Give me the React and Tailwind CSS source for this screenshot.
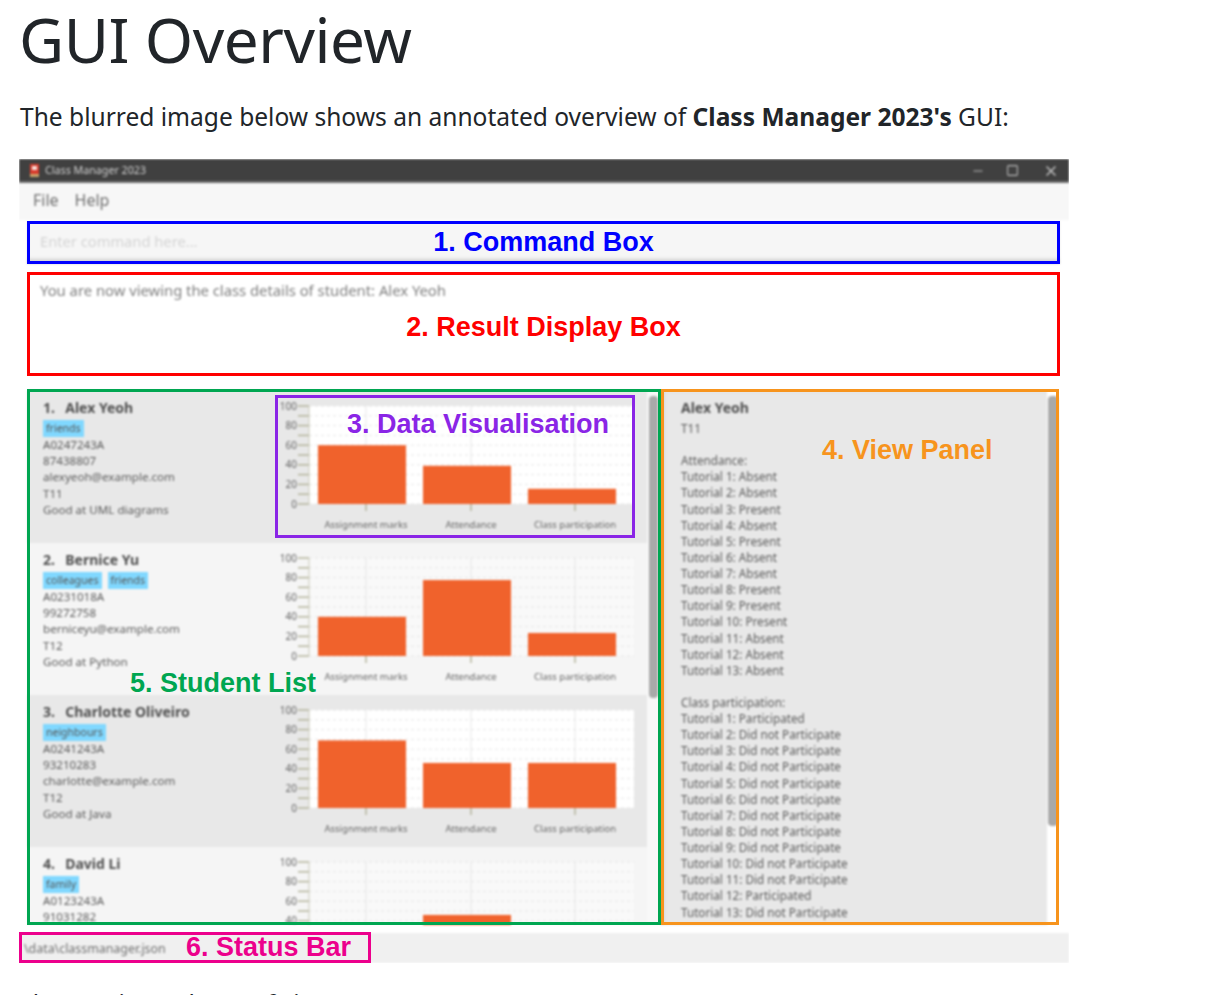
import React from 'react';
import { Minus, Square, X } from 'lucide-react';

const students = [
  {
    name: 'Alex Yeoh',
    tags: ['friends'],
    lines: ['A0247243A', '87438807', 'alexyeoh@example.com', 'T11', 'Good at UML diagrams'],
    values: [60, 39, 15.5],
    plot: '#ffffff',
    card: 'bg-[#e8e8e8]',
  },
  {
    name: 'Bernice Yu',
    tags: ['colleagues', 'friends'],
    lines: ['A0231018A', '99272758', 'berniceyu@example.com', 'T12', 'Good at Python'],
    values: [40, 77.5, 23.5],
    plot: '#f9f9f9',
    card: 'bg-[#f5f5f5]',
  },
  {
    name: 'Charlotte Oliveiro',
    tags: ['neighbours'],
    lines: ['A0241243A', '93210283', 'charlotte@example.com', 'T12', 'Good at Java'],
    values: [69, 46, 46],
    plot: '#ffffff',
    card: 'bg-[#e8e8e8]',
  },
  {
    name: 'David Li',
    tags: ['family'],
    lines: ['A0123243A', '91031282'],
    values: [30, 46, 20],
    plot: '#f9f9f9',
    card: 'bg-[#f5f5f5]',
  },
];

const attendance = ['Absent', 'Absent', 'Present', 'Absent', 'Present', 'Absent', 'Absent', 'Present', 'Present', 'Present', 'Absent', 'Absent', 'Absent'];
const participation = ['Participated', 'Did not Participate', 'Did not Participate', 'Did not Participate', 'Did not Participate', 'Did not Participate', 'Did not Participate', 'Did not Participate', 'Did not Participate', 'Did not Participate', 'Did not Participate', 'Participated', 'Did not Participate'];
const categories = ['Assignment marks', 'Attendance', 'Class participation'];

function Chart({ values, plot }) {
  const top = 7;
  const base = 105;
  const barX = [43, 148, 253];
  const centers = [91, 196, 300];
  return (
    <svg width="362" height="135" viewBox="0 0 362 135" className="mt-2 shrink-0 font-['Noto_Sans',sans-serif]">
      <rect x="34" y={top} width="325" height={base - top} fill={plot} />
      {[0, 1, 2, 3, 4, 5, 6, 7, 8, 9, 10].map((i) => (
        <g key={i}>
          <line x1="34" x2="359" y1={base - i * 9.8} y2={base - i * 9.8} stroke="#e6e6e6" strokeDasharray="3 3" />
          <line x1="23" x2="34" y1={base - i * 9.8} y2={base - i * 9.8} stroke="#b5b59c" strokeWidth="1.5" />
        </g>
      ))}
      {centers.map((c) => (
        <line key={c} x1={c} x2={c} y1={top} y2={base} stroke="#e6e6e6" />
      ))}
      <line x1="34" x2="34" y1={top} y2={base} stroke="#c9c9b8" />
      {[0, 20, 40, 60, 80, 100].map((v) => (
        <text key={v} x="22" y={base - v * 0.98 + 3.5} textAnchor="end" fontSize="10" fill="#666">
          {v}
        </text>
      ))}
      {values.map((v, i) => (
        <rect key={i} x={barX[i]} y={base - v * 0.98} width="88" height={v * 0.98} fill="#f0622c" />
      ))}
      {centers.map((c, i) => (
        <g key={c}>
          <line x1={c} x2={c} y1={base} y2={base + 7} stroke="#b5b59c" strokeWidth="1.5" />
          <text x={c} y={base + 24} textAnchor="middle" fontSize="9.5" fill="#666">
            {categories[i]}
          </text>
        </g>
      ))}
    </svg>
  );
}

function StudentCard({ student, index }) {
  return (
    <div className={`flex h-[152px] shrink-0 ${student.card}`}>
      <div className="w-[248px] shrink-0 pl-4 pt-2 text-[#5c5c5c]">
        <div className="text-[14px] font-bold leading-[18px] text-[#505050]">
          {index + 1}.&nbsp; <span className="ml-[3px]">{student.name}</span>
        </div>
        <div className="mt-[3px] flex gap-[6px]">
          {student.tags.map((tag) => (
            <span key={tag} className="h-[17px] bg-[#80d8ff] px-[3px] text-[10.5px] leading-[17px] text-[#555]">
              {tag}
            </span>
          ))}
        </div>
        {student.lines.map((line) => (
          <div key={line} className="text-[11.6px] leading-[16.2px]">
            {line}
          </div>
        ))}
      </div>
      <Chart values={student.values} plot={student.plot} />
    </div>
  );
}

function ViewPanel() {
  return (
    <div className="h-full flex-1 overflow-hidden bg-[#e8e8e8] pl-[20px] pt-[8px] text-[11.7px] leading-[16.13px] text-[#5c5c5c] shadow-[inset_3px_0_3px_#d0d0d0]">
      <div className="text-[14px] font-bold leading-[18px] text-[#505050]">Alex Yeoh</div>
      <div className="mt-[3px]">T11</div>
      <div className="mt-[16px]">Attendance:</div>
      {attendance.map((a, i) => (
        <div key={i}>Tutorial {i + 1}: {a}</div>
      ))}
      <div className="mt-[16px]">Class participation:</div>
      {participation.map((p, i) => (
        <div key={i}>Tutorial {i + 1}: {p}</div>
      ))}
    </div>
  );
}

export default function App() {
  return (
    <div className="h-[995px] overflow-hidden bg-white pl-[19px] font-['Noto_Sans',sans-serif] text-[#212529]">
      <h1 className="h-[78px] text-[62px] font-normal leading-[78px] tracking-[-0.45px]">GUI Overview</h1>
      <p className="ml-[1px] mt-[21px] text-[24.55px] leading-[36px]">
        The blurred image below shows an annotated overview of <strong className="font-bold">Class Manager 2023's</strong> GUI:
      </p>

      <div className="relative mt-[24px] h-[804px] w-[1050px]">
        {/* the app screenshot, blurred as a whole */}
        <div className="h-full overflow-hidden">
          <div className="flex h-full flex-col bg-white blur-[1.1px]">
            <div className="flex h-[24px] shrink-0 items-center bg-[#404040] pb-[1px] pl-[11px] pr-[10px] text-[10.7px] text-[#cfcfcf] shadow-[inset_0_-2px_1px_#707070]">
              <svg width="9" height="13" viewBox="0 0 9 13" className="mr-[6px]">
                <rect width="9" height="10" fill="#d8392b" />
                <rect x="2" y="2" width="5" height="4" fill="#f5e0dc" />
                <rect y="10" width="9" height="3" fill="#c9a36a" />
              </svg>
              <span>Class Manager 2023</span>
              <div className="ml-auto flex items-center text-[#b8b8b8]">
                <Minus size={14} strokeWidth={2} />
                <Square size={13} strokeWidth={2} className="ml-[21px]" />
                <X size={16} strokeWidth={2.5} className="ml-[24px]" />
              </div>
            </div>

            <div className="flex h-[37px] shrink-0 items-center gap-[16px] bg-[#f7f7f7] pb-[3px] pl-[14px] text-[16px] text-[#707070]">
              <span>File</span>
              <span>Help</span>
            </div>

            <div className="ml-[8px] mr-[9px] mt-[1px] flex h-[43px] shrink-0 items-center bg-[#f6f6f6] pb-[3px] pl-[13px] text-[14.7px] text-[#d4d4d4] shadow-[inset_0_-5px_3px_#d2d2d2]">
              Enter command here...
            </div>

            <div className="ml-[8px] mr-[9px] mt-[8px] h-[104px] shrink-0 bg-white pl-[13px] pt-[8px] text-[14.8px] leading-[20px] text-[#808080]">
              You are now viewing the class details of student: Alex Yeoh
            </div>

            <div className="ml-[8px] mr-[9px] mt-[14px] flex h-[535px] shrink-0 overflow-hidden">
              <div className="flex w-[634px] shrink-0 bg-[#f8f8f8] pt-[1px]">
                <div className="flex w-[620px] shrink-0 flex-col">
                  {students.map((s, i) => (
                    <StudentCard key={s.name} student={s} index={i} />
                  ))}
                </div>
                <div className="ml-[2px] mt-[5px] h-[302px] w-[9px] rounded-[4px] bg-[#a9a9a9]" />
              </div>
              <div className="flex min-w-0 flex-1 bg-white pt-[1px]">
                <ViewPanel />
                <div className="ml-[1px] mr-[2px] mt-[5px] h-[430px] w-[10px] rounded-[4px] bg-[#a9a9a9]" />
              </div>
            </div>

            <div className="mt-[8px] flex h-[30px] shrink-0 items-center bg-[#f0f0f0] pl-[5px] pt-[2px] text-[12.4px] text-[#707070]">
              \data\classmanager.json
            </div>
          </div>
        </div>

        {/* annotation boxes drawn over the screenshot */}
        <div className="absolute left-[8px] top-[62px] flex h-[43px] w-[1033px] items-center justify-center border-[3px] border-[#0000ff] font-['Liberation_Sans',Arial,sans-serif] text-[27px] font-bold text-[#0000ff]">
          1. Command Box
        </div>
        <div className="absolute left-[8px] top-[113px] flex h-[104px] w-[1033px] items-center justify-center border-[3px] border-[#ff0000] pt-[7px] font-['Liberation_Sans',Arial,sans-serif] text-[27px] font-bold text-[#ff0000]">
          2. Result Display Box
        </div>
        <div className="absolute left-[8px] top-[230px] h-[536px] w-[634px] border-[3px] border-[#00a651]">
          <span className="absolute left-[100px] top-[275px] whitespace-nowrap font-['Liberation_Sans',Arial,sans-serif] text-[27px] font-bold leading-[32px] text-[#00a651]">
            5. Student List
          </span>
        </div>
        <div className="absolute left-[642px] top-[230px] h-[536px] w-[398px] border-[3px] border-[#f7941d]">
          <span className="absolute left-[158px] top-[42px] whitespace-nowrap font-['Liberation_Sans',Arial,sans-serif] text-[27px] font-bold leading-[32px] text-[#f7941d]">
            4. View Panel
          </span>
        </div>
        <div className="absolute left-[256px] top-[236px] h-[143px] w-[360px] border-[3px] border-[#8a25e6]">
          <span className="absolute left-[69px] top-[10px] whitespace-nowrap font-['Liberation_Sans',Arial,sans-serif] text-[27px] font-bold leading-[32px] text-[#8a25e6]">
            3. Data Visualisation
          </span>
        </div>
        <div className="absolute left-0 top-[773px] h-[31px] w-[352px] border-[3px] border-[#ec008c]">
          <span className="absolute left-[164px] top-[-4px] whitespace-nowrap font-['Liberation_Sans',Arial,sans-serif] text-[27px] font-bold leading-[32px] text-[#ec008c]">
            6. Status Bar
          </span>
        </div>
      </div>

      <p className="mt-[23px] text-[24.55px] leading-[36px]">The GUI is made up of six parts</p>
    </div>
  );
}
